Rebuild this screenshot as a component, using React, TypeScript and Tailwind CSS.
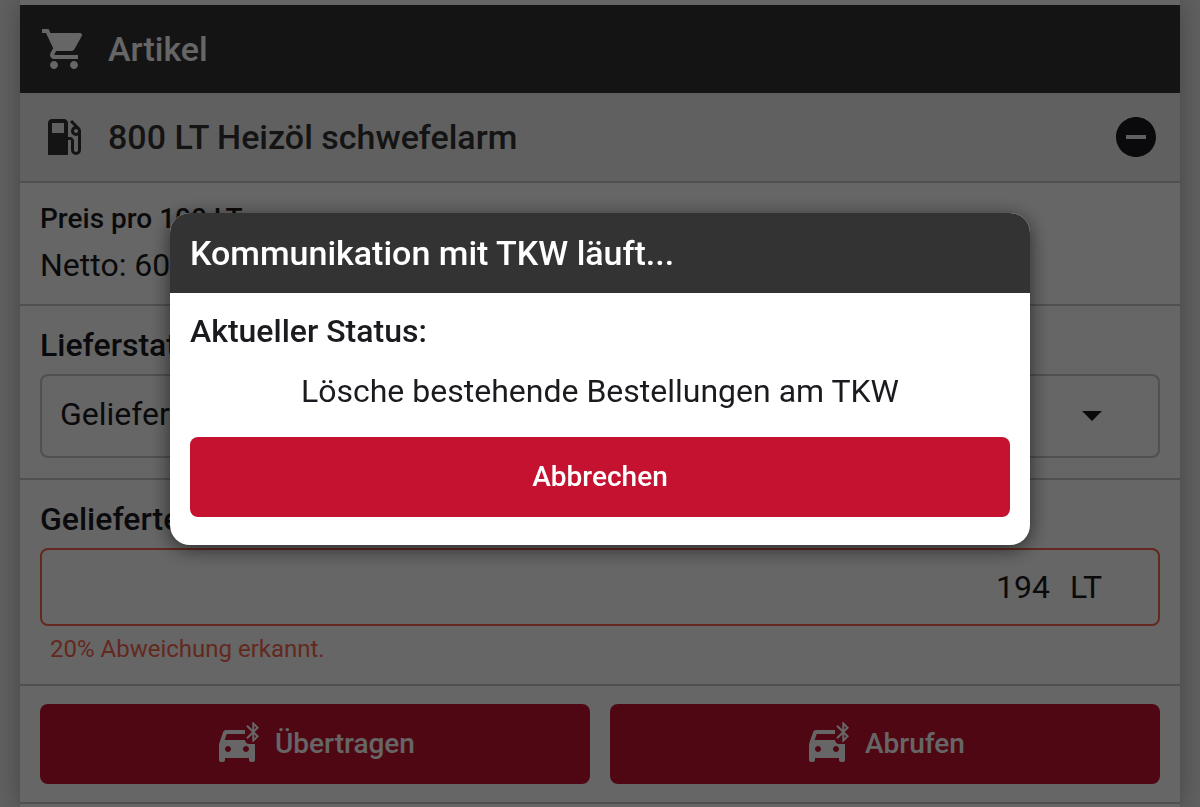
import type { ReactNode } from "react";
import {
  MdBluetoothDrive,
  MdLocalGasStation,
  MdRemoveCircle,
  MdShoppingCart,
} from "react-icons/md";

function Section({ children, className }: { children: ReactNode; className: string }) {
  return <section className={`border-b-2 border-[#c8c8c8] px-5 ${className}`}>{children}</section>;
}

function TransferButton({ label }: { label: string }) {
  return (
    <button
      type="button"
      className="flex h-20 flex-1 items-center justify-center gap-3 rounded-lg bg-[#c41230] text-[28px] font-medium text-white"
    >
      <MdBluetoothDrive className="size-12" aria-hidden="true" />
      {label}
    </button>
  );
}

function ArticleCard() {
  return (
    <main className="min-h-screen bg-white pt-[5px] shadow-[0_0_24px_rgba(0,0,0,0.3)]">
      <header className="flex items-center gap-5 bg-[#333333] p-5 text-white">
        <MdShoppingCart className="size-12" aria-hidden="true" />
        <h1 className="text-[34px] leading-12 font-medium">Artikel</h1>
      </header>

      <Section className="flex items-center gap-5 bg-[#f0f0f0] py-5 text-[#333333]">
        <MdLocalGasStation className="size-12" aria-hidden="true" />
        <h2 className="flex-1 text-[34px] leading-12 font-medium">800 LT Heizöl schwefelarm</h2>
        <button type="button" aria-label="Artikel entfernen" className="text-[#1b1b1f]">
          <MdRemoveCircle className="size-12" aria-hidden="true" />
        </button>
      </Section>

      <Section className="pt-4 pb-[13px]">
        <h3 className="text-[28px] leading-10 font-medium">Preis pro 100 LT</h3>
        <p className="text-[32px] leading-[52px]">Netto: 60,00 €</p>
      </Section>

      <Section className="pt-[14px] pb-5">
        <label htmlFor="status" className="mb-1 block text-[32px] leading-[50px] font-medium">
          Lieferstatus
        </label>
        <div className="grid items-center">
          <select
            id="status"
            className="col-start-1 row-start-1 h-[84px] w-full appearance-none rounded-lg border-2 border-[#c8c8c8] bg-transparent px-[18px] pb-1 text-[32px]"
          >
            <option>Geliefert</option>
          </select>
          <svg
            viewBox="0 0 20 10"
            className="pointer-events-none col-start-1 row-start-1 mr-[58px] h-[10px] w-5 justify-self-end"
            aria-hidden="true"
          >
            <path d="M0 0h20L10 10z" fill="currentColor" />
          </svg>
        </div>
      </Section>

      <Section className="pt-[14px] pb-4">
        <label htmlFor="menge" className="mb-1 block text-[32px] leading-[50px] font-medium">
          Gelieferte Menge
        </label>
        <div className="flex h-[78px] items-center gap-5 rounded-lg border-2 border-[#f9664d] pr-14 pl-5 text-[32px]">
          <input
            id="menge"
            type="text"
            inputMode="numeric"
            defaultValue="194"
            className="min-w-0 flex-1 bg-transparent text-right outline-none"
          />
          <span>LT</span>
        </div>
        <p className="mt-1 px-[10px] text-[24px] leading-[38px] text-[#f9664d]">20% Abweichung erkannt.</p>
      </Section>

      <Section className="flex gap-5 py-[18px]">
        <TransferButton label="Übertragen" />
        <TransferButton label="Abrufen" />
      </Section>
    </main>
  );
}

function CommunicationDialog() {
  return (
    <div className="fixed inset-0 flex justify-center bg-black/60 px-5 pt-[213px]">
      <div
        role="dialog"
        aria-modal="true"
        aria-labelledby="dialog-title"
        className="w-full max-w-[860px] self-start overflow-hidden rounded-[20px] bg-white shadow-[0_4px_20px_rgba(0,0,0,0.6)]"
      >
        <h2
          id="dialog-title"
          className="bg-[#333333] px-5 py-4 text-[34px] leading-12 font-medium text-white"
        >
          Kommunikation mit TKW läuft...
        </h2>
        <div className="px-5 pt-3 pb-7">
          <h3 className="text-[32px] leading-[52px] font-medium">Aktueller Status:</h3>
          <p className="pt-2 pb-5 text-center text-[32px] leading-[52px]">
            Lösche bestehende Bestellungen am TKW
          </p>
          <button
            type="button"
            className="h-20 w-full rounded-lg bg-[#c41230] text-[28px] font-medium text-white"
          >
            Abbrechen
          </button>
        </div>
      </div>
    </div>
  );
}

export default function App() {
  return (
    <div className="h-screen overflow-hidden bg-[#f0f0f0] px-5 font-['Roboto',sans-serif] text-[#1b1b1f]">
      <ArticleCard />
      <CommunicationDialog />
    </div>
  );
}
